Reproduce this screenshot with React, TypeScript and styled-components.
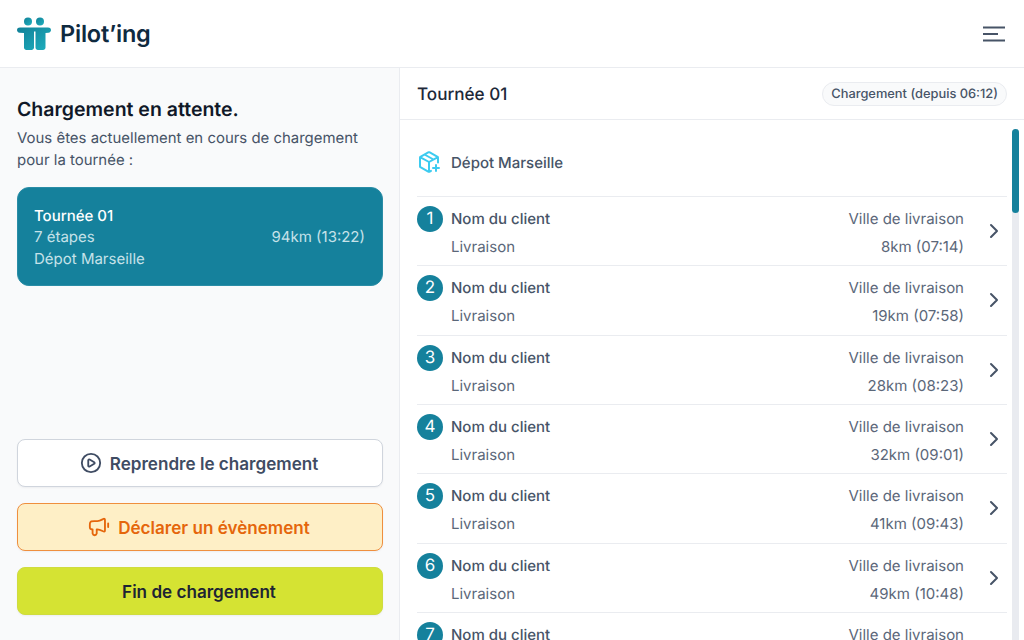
import React from 'react'
import { createGlobalStyle, styled } from 'styled-components'
import { ChevronRight, CirclePlay } from 'lucide-react'

const GlobalStyle = createGlobalStyle`
  html, body {
    margin: 0;
    padding: 0;
    height: 100%;
    overflow: hidden;
    background: #fff;
    font-family: Inter, "Liberation Sans", sans-serif;
    text-rendering: geometricPrecision;
    -webkit-font-smoothing: antialiased;
  }
  * { box-sizing: border-box; }
`

const Page = styled.div`
  display: flex;
  flex-direction: column;
  width: 1024px;
  height: 640px;
  overflow: hidden;
`

const TopBar = styled.header`
  display: flex;
  align-items: center;
  justify-content: space-between;
  flex: none;
  height: 68px;
  padding: 0 19px 0 17px;
  border-bottom: 1px solid #eaecf0;
`

const Brand = styled.div`
  display: flex;
  align-items: center;
  gap: 9px;
`

const BrandName = styled.span`
  font-size: 23.5px;
  font-weight: 600;
  letter-spacing: -0.2px;
  color: #0f2a3f;
`

const MenuButton = styled.button`
  display: flex;
  padding: 0;
  border: 0;
  background: none;
`

const Body = styled.div`
  display: flex;
  flex: 1;
  min-height: 0;
`

const Sidebar = styled.aside`
  display: flex;
  flex-direction: column;
  flex: none;
  width: 400px;
  padding: 27px 16px 25px 17px;
  background: #f9fafb;
  border-right: 1px solid #eaecf0;
`

const Title = styled.h1`
  margin: 0 0 4px;
  font-size: 19.5px;
  line-height: 28px;
  font-weight: 600;
  color: #101828;
`

const Intro = styled.p`
  margin: 0 0 16px;
  font-size: 14.95px;
  line-height: 22px;
  color: #475467;
`

const RouteCard = styled.div`
  display: flex;
  flex-direction: column;
  height: 99px;
  padding: 16.5px 17px 0 16px;
  border-radius: 12px;
  background: #15819c;
  border: 1px solid #2a8da6;
  font-size: 15px;
  line-height: 21.5px;
  color: #c6e2e9;
`

const RouteName = styled.div`
  font-weight: 500;
  color: #fff;
`

const RouteLine = styled.div`
  display: flex;
  justify-content: space-between;
`

const Actions = styled.div`
  display: flex;
  flex-direction: column;
  gap: 16px;
  margin-top: auto;
`

const tones = {
  neutral: { bg: '#fff', border: '#d0d5dd', color: '#3f4c63' },
  warning: { bg: '#feefc6', border: '#ef8f3e', color: '#e5660b' },
  primary: { bg: '#d5e333', border: '#cfdc3f', color: '#1d2433' },
}

const ActionButton = styled.button<{ $tone: keyof typeof tones }>`
  display: flex;
  align-items: center;
  justify-content: center;
  gap: 8px;
  height: 48px;
  padding: 0 2px 0 0;
  border-radius: 8px;
  border: 1px solid ${(p) => tones[p.$tone].border};
  background: ${(p) => tones[p.$tone].bg};
  color: ${(p) => tones[p.$tone].color};
  font-family: inherit;
  font-size: 17.1px;
  font-weight: 600;
  box-shadow: 0 1px 2px rgba(16, 24, 40, 0.05);
`

const Main = styled.main`
  display: flex;
  flex-direction: column;
  flex: 1;
  min-width: 0;
`

const MainHeader = styled.div`
  display: flex;
  align-items: center;
  justify-content: space-between;
  flex: none;
  height: 52px;
  padding: 1px 17px 0;
  border-bottom: 1px solid #eaecf0;
`

const MainTitle = styled.h2`
  margin: 0;
  font-size: 17.1px;
  font-weight: 500;
  color: #1d2939;
`

const StatusPill = styled.span`
  display: inline-flex;
  align-items: center;
  height: 24px;
  padding: 0 8px;
  border: 1px solid #eaecf0;
  border-radius: 12px;
  background: #f9fafb;
  font-size: 12.85px;
  font-weight: 500;
  color: #475467;
`

const ScrollArea = styled.div`
  display: flex;
  flex: 1;
  min-height: 0;
  padding-left: 17px;
`

const Stops = styled.div`
  flex: 1;
  min-width: 0;
  overflow: hidden;
`

const DepotRow = styled.div`
  display: flex;
  align-items: center;
  gap: 10px;
  height: 77px;
  padding-top: 8px;
  border-bottom: 1px solid #eaecf0;
  font-size: 15px;
  font-weight: 500;
  color: #475467;
`

const StopRow = styled.div`
  display: grid;
  grid-template-columns: 26px 1fr auto 35px;
  column-gap: 8px;
  height: 69.33px;
  padding-top: 8px;
  border-bottom: 1px solid #eaecf0;
`

const StopBadge = styled.span`
  display: flex;
  align-items: center;
  justify-content: center;
  width: 26px;
  height: 26px;
  margin-top: 1px;
  border-radius: 50%;
  background: #15819c;
  color: #fff;
  font-size: 17px;
`

const StopCell = styled.div<{ $end?: boolean }>`
  display: flex;
  flex-direction: column;
  gap: 7px;
  padding-top: 3px;
  text-align: ${(p) => (p.$end ? 'right' : 'left')};
  font-size: 15px;
  line-height: 21px;
  color: #5b6779;
`

const ClientName = styled.span`
  font-weight: 500;
  color: #475467;
`

const ChevronCell = styled.div`
  display: flex;
  justify-content: flex-end;
  padding: 14px 1px 0 0;
  color: #475467;
`

const ScrollRail = styled.div`
  flex: none;
  width: 7px;
  margin: 9px 5px 0 5px;
  border-radius: 4px 4px 0 0;
  background: #e9ebf0;
`

const ScrollThumb = styled.div`
  height: 84px;
  border-radius: 4px;
  background: #15819c;
`

const stops = [
  '8km (07:14)',
  '19km (07:58)',
  '28km (08:23)',
  '32km (09:01)',
  '41km (09:43)',
  '49km (10:48)',
  '57km (11:20)',
]

function Logo() {
  return (
    <svg width="34" height="33" viewBox="0 0 34 33" fill="none">
      <defs>
        <linearGradient id="logoFill" x1="0" y1="0" x2="1" y2="1">
          <stop offset="0" stopColor="#118097" />
          <stop offset="1" stopColor="#1fb0bf" />
        </linearGradient>
      </defs>
      <circle cx="11" cy="4.500" r="4" fill="url(#logoFill)" />
      <circle cx="23" cy="4.500" r="4" fill="url(#logoFill)" />
      <path
        fill="url(#logoFill)"
        d="M0 13c0-1.700 1.300-2.500 3-2.500h28c1.700 0 3 .8 3 2.500 0 1.500-1 2.600-2.500 2.700L28.500 16v14.500c0 1.400-1.100 2.500-2.500 2.500h-5c-1.400 0-2.500-1.100-2.500-2.500V14.500h-1.500v16c0 1.400-1.100 2.500-2.500 2.500H9.500C8.100 33 7 31.900 7 30.500V16l-4.500-.3C1 15.600 0 14.500 0 13z"
      />
    </svg>
  )
}

function MenuIcon() {
  return (
    <svg width="22" height="16" viewBox="0 0 22 16" fill="none" stroke="#475467" strokeWidth="2">
      <path d="M0 1.500h22M0 8h15M0 14.500h22" />
    </svg>
  )
}

function MegaphoneIcon() {
  return (
    <svg width="22" height="22" viewBox="0 0 24 24" fill="none" stroke="currentColor" strokeWidth="2" strokeLinecap="round" strokeLinejoin="round">
      <path d="M22 8v4M10.250 5.500H6.800c-1.680 0-2.520 0-3.162.327a3 3 0 0 0-1.311 1.311C2 7.780 2 8.620 2 10.300v1.200c0 .932 0 1.398.152 1.765a2 2 0 0 0 1.083 1.083C3.602 14.500 4.068 14.500 5 14.500v4.250c0 .232 0 .348.01.446a2.500 2.500 0 0 0 2.240 1.804 2.500 2.500 0 0 0 2.240-1.804c.01-.098.01-.214.01-.446V14.500h.75c1.766 0 3.927.947 5.594 1.856.973.530 1.459.795 1.778.756a.940.940 0 0 0 .692-.411c.186-.261.186-.784.186-1.829V5.128c0-1.045 0-1.568-.187-1.829a.940.940 0 0 0-.691-.411c-.319-.039-.805.226-1.778.756C14.177 4.553 12.016 5.500 10.250 5.500z" />
    </svg>
  )
}

function DepotIcon() {
  return (
    <svg width="24" height="24" viewBox="0 0 24 24" fill="none" stroke="#3ccbf0" strokeWidth="2" strokeLinecap="round" strokeLinejoin="round">
      <path d="M20.500 7.278 12 12m0 0L3.500 7.278M12 12v9.500m2-.611-1.223.679c-.284.158-.425.237-.576.268a1 1 0 0 1-.402 0c-.151-.031-.292-.110-.576-.268l-7.400-4.111c-.300-.166-.449-.249-.558-.368a1 1 0 0 1-.215-.364C3 16.573 3 16.401 3 16.059V7.942c0-.343 0-.515.050-.667a1 1 0 0 1 .215-.364c.109-.119.258-.202.558-.368l7.400-4.111c.284-.158.425-.237.576-.268a1 1 0 0 1 .402 0c.151.031.292.110.576.268l7.400 4.111c.300.166.449.249.558.368a1 1 0 0 1 .215.364c.050.152.050.324.050.667V12.500M7.500 4.500l9 5M19 21v-6m-3 3h6" />
    </svg>
  )
}

export default function App() {
  return (
    <Page>
      <GlobalStyle />
      <TopBar>
        <Brand>
          <Logo />
          <BrandName>Pilot’ing</BrandName>
        </Brand>
        <MenuButton aria-label="Menu">
          <MenuIcon />
        </MenuButton>
      </TopBar>
      <Body>
        <Sidebar>
          <Title>Chargement en attente.</Title>
          <Intro>
            Vous êtes actuellement en cours de chargement
            <br />
            pour la tournée :
          </Intro>
          <RouteCard>
            <RouteName>Tournée 01</RouteName>
            <RouteLine>
              <span>7 étapes</span>
              <span>94km (13:22)</span>
            </RouteLine>
            <div>Dépot Marseille</div>
          </RouteCard>
          <Actions>
            <ActionButton $tone="neutral">
              <CirclePlay size={22} strokeWidth={2} />
              Reprendre le chargement
            </ActionButton>
            <ActionButton $tone="warning">
              <MegaphoneIcon />
              Déclarer un évènement
            </ActionButton>
            <ActionButton $tone="primary">Fin de chargement</ActionButton>
          </Actions>
        </Sidebar>
        <Main>
          <MainHeader>
            <MainTitle>Tournée 01</MainTitle>
            <StatusPill>Chargement (depuis 06:12)</StatusPill>
          </MainHeader>
          <ScrollArea>
            <Stops>
              <DepotRow>
                <DepotIcon />
                Dépot Marseille
              </DepotRow>
              {stops.map((distance, i) => (
                <StopRow key={distance}>
                  <StopBadge>{i + 1}</StopBadge>
                  <StopCell>
                    <ClientName>Nom du client</ClientName>
                    <span>Livraison</span>
                  </StopCell>
                  <StopCell $end>
                    <span>Ville de livraison</span>
                    <span>{distance}</span>
                  </StopCell>
                  <ChevronCell>
                    <ChevronRight size={24} strokeWidth={2} />
                  </ChevronCell>
                </StopRow>
              ))}
            </Stops>
            <ScrollRail>
              <ScrollThumb />
            </ScrollRail>
          </ScrollArea>
        </Main>
      </Body>
    </Page>
  )
}
